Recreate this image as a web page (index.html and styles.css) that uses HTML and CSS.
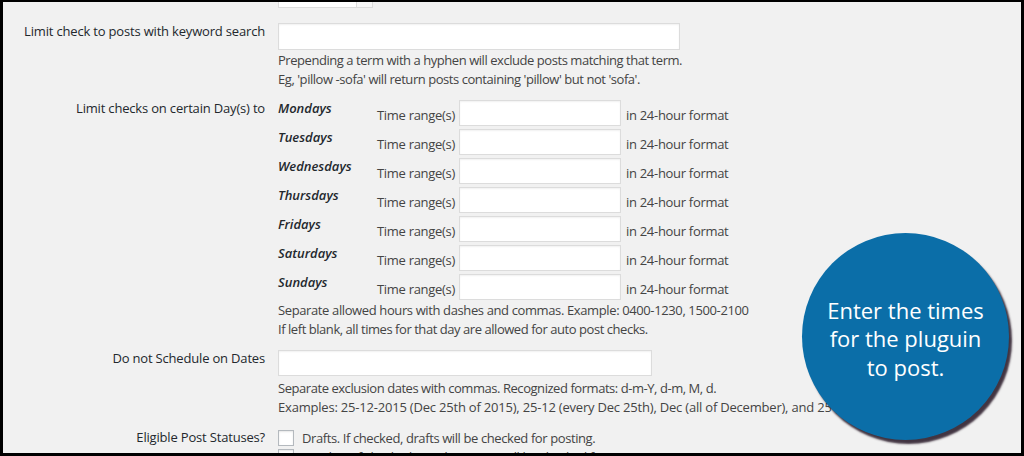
FILE: index.html
```html
<!DOCTYPE html>
<html lang="en">
<head>
<meta charset="utf-8">
<title>Auto post settings</title>
<link rel="stylesheet" href="styles.css">
</head>
<body>
<div class="frame">
  <div class="row row-top">
    <div></div>
    <div class="select"><span class="select-arrow"></span></div>
  </div>

  <div class="row row-keyword">
    <div class="label">Limit check to posts with keyword search</div>
    <div class="field">
      <div class="input input-wide"></div>
      <p class="desc desc-first">Prepending a term with a hyphen will exclude posts matching that term.</p>
      <p class="desc">Eg, 'pillow -sofa' will return posts containing 'pillow' but not 'sofa'.</p>
    </div>
  </div>

  <div class="row row-days">
    <div class="label">Limit checks on certain Day(s) to</div>
    <div class="field">
      <div class="day"><span class="day-name">Mondays</span><span class="tr">Time range(s)</span><span class="input input-time"></span><span class="fmt">in 24-hour format</span></div>
      <div class="day"><span class="day-name">Tuesdays</span><span class="tr">Time range(s)</span><span class="input input-time"></span><span class="fmt">in 24-hour format</span></div>
      <div class="day"><span class="day-name">Wednesdays</span><span class="tr">Time range(s)</span><span class="input input-time"></span><span class="fmt">in 24-hour format</span></div>
      <div class="day"><span class="day-name">Thursdays</span><span class="tr">Time range(s)</span><span class="input input-time"></span><span class="fmt">in 24-hour format</span></div>
      <div class="day"><span class="day-name">Fridays</span><span class="tr">Time range(s)</span><span class="input input-time"></span><span class="fmt">in 24-hour format</span></div>
      <div class="day"><span class="day-name">Saturdays</span><span class="tr">Time range(s)</span><span class="input input-time"></span><span class="fmt">in 24-hour format</span></div>
      <div class="day"><span class="day-name">Sundays</span><span class="tr">Time range(s)</span><span class="input input-time"></span><span class="fmt">in 24-hour format</span></div>
      <p class="desc desc-first desc-digits">Separate allowed hours with dashes and commas. Example: 0400-1230, 1500-2100</p>
      <p class="desc">If left blank, all times for that day are allowed for auto post checks.</p>
    </div>
  </div>

  <div class="row row-dates">
    <div class="label">Do not Schedule on Dates</div>
    <div class="field">
      <div class="input input-dates"></div>
      <p class="desc desc-first2">Separate exclusion dates with commas. Recognized formats: d-m-Y, d-m, M, d.</p>
      <p class="desc desc-examples">Examples: 25-12-2015 (Dec 25th of 2015), 25-12 (every Dec 25th), Dec (all of December), and 25 (every 25th).</p>
    </div>
  </div>

  <div class="row row-status">
    <div class="label label-status">Eligible Post Statuses?</div>
    <div class="field">
      <div class="check-row"><span class="checkbox"></span><span>Drafts. If checked, drafts will be checked for posting.</span></div>
      <div class="check-row"><span class="checkbox checked">&#10003;</span><span>Pending. If checked, pending posts will be checked for posting.</span></div>
    </div>
  </div>

  <div class="bubble">
    <p>Enter the times<br>for the pluguin<br>to post.</p>
  </div>
</div>
</body>
</html>
```

FILE: styles.css
```css
html, body {
  margin: 0;
  padding: 0;
  background: #000;
}
body {
  width: 1024px;
  height: 456px;
  overflow: hidden;
}
.frame {
  position: relative;
  width: 1018px;
  height: 451px;
  margin: 2px 0 0 3px;
  background: #f1f1f1;
  overflow: hidden;
  font-family: "Open Sans", "Noto Sans", sans-serif;
  font-size: 13px;
  color: #444;
  white-space: nowrap;
}
.row {
  display: grid;
  grid-template-columns: 262px 1fr;
  column-gap: 13px;
  align-items: start;
}
.label {
  text-align: right;
  color: #23282d;
  line-height: 20px;
  margin-top: -2px;
  letter-spacing: -0.18px;
}
.field {
  display: flex;
  flex-direction: column;
  align-items: flex-start;
}
.input {
  display: block;
  background: #fff;
  border: 1px solid #dcdcdc;
  box-shadow: inset 0 1px 2px rgba(0,0,0,0.06);
  box-sizing: border-box;
}
.row-top { margin-top: -22px; }
.select {
  position: relative;
  width: 95px;
  height: 28px;
  box-sizing: border-box;
  background: #fff;
  border: 1px solid #dcdcdc;
}
.select-arrow {
  position: absolute;
  right: 0;
  top: 0;
  width: 15px;
  height: 100%;
  border-left: 1px solid #dcdcdc;
  background: #f7f7f7;
}
.row-keyword { margin-top: 15px; }
.input-wide { width: 402px; height: 27px; }
.desc {
  margin: 0;
  line-height: 19px;
  letter-spacing: -0.45px;
}
.desc-first { margin-top: 1px; }
.desc-first2 { margin-top: 3px; }
.desc-digits { letter-spacing: -0.38px; }
.desc-examples { letter-spacing: -0.2px; }

.row-days { margin-top: 11px; }
.day {
  display: grid;
  grid-template-columns: 99px 82px 162px auto;
  align-items: center;
  height: 26px;
  margin-bottom: 3px;
}
.day:nth-of-type(7) { margin-bottom: 0; }
.day-name {
  align-self: start;
  margin-top: -2px;
  line-height: 20px;
  font-style: italic;
  font-weight: 600;
  color: #23282d;
}
.tr { padding-top: 3px; letter-spacing: -0.3px; }
.fmt { padding-left: 5px; padding-top: 3px; letter-spacing: -0.3px; }
.input-time { height: 26px; }

.row-dates { margin-top: 11px; }
.input-dates { width: 374px; height: 26px; }

.row-status { margin-top: 13px; }
.label-status { margin-top: -3px; }
.check-row {
  display: flex;
  align-items: center;
  gap: 8px;
  height: 16px;
  margin-bottom: 3px;
  letter-spacing: -0.4px;
}
.checkbox {
  width: 16px;
  height: 16px;
  box-sizing: border-box;
  background: #fff;
  border: 1px solid #b4b9be;
  box-shadow: inset 0 1px 2px rgba(0,0,0,0.1);
  font-size: 12px;
  line-height: 14px;
  text-align: center;
  color: #555;
  letter-spacing: 0;
}

.bubble {
  position: absolute;
  left: 799px;
  top: 231px;
  width: 207px;
  height: 207px;
  border-radius: 50%;
  background: #0b6ea8;
  box-shadow: 3px 4px 2px rgba(35, 20, 35, 0.85);
  display: flex;
  align-items: center;
  justify-content: center;
}
.bubble p {
  margin: 0;
  padding-top: 4px;
  color: #fff;
  text-align: center;
  font-family: "Open Sans", sans-serif;
  font-size: 22px;
  line-height: 28.5px;
}
```
